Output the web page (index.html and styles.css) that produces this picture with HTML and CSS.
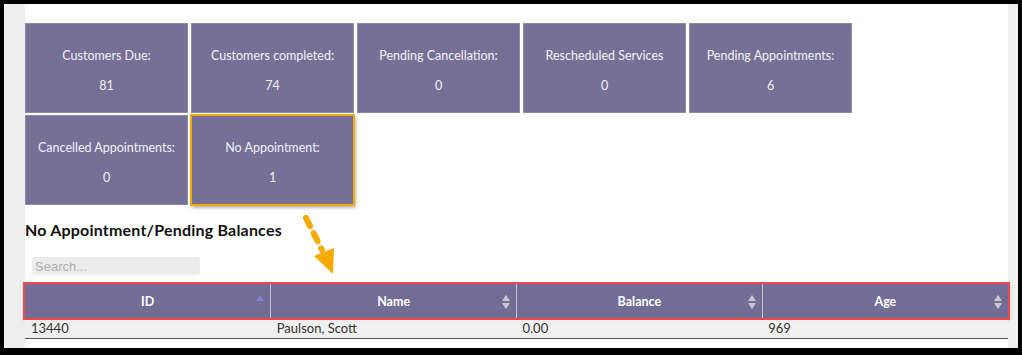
FILE: index.html
```html
<!DOCTYPE html>
<html>
<head>
    <title>Dashboard</title>
    <link rel="stylesheet" href="styles.css">
</head>
<body>
    <div class="screen">
        <div class="gutter"></div>
        <div class="main">
            <div class="tiles">
                <div class="tile"><span class="label">Customers Due:</span><span class="value">81</span></div>
                <div class="tile"><span class="label">Customers completed:</span><span class="value">74</span></div>
                <div class="tile"><span class="label">Pending Cancellation:</span><span class="value">0</span></div>
                <div class="tile"><span class="label">Rescheduled Services</span><span class="value">0</span></div>
                <div class="tile"><span class="label">Pending Appointments:</span><span class="value">6</span></div>
                <div class="tile"><span class="label">Cancelled Appointments:</span><span class="value">0</span></div>
                <div class="tile selected"><span class="label">No Appointment:</span><span class="value">1</span></div>
            </div>

            <h2>No Appointment/Pending Balances</h2>
            <input class="search" type="text" placeholder="Search...">

            <table class="grid">
                <thead>
                    <tr>
                        <th>ID<span class="sort asc"></span></th>
                        <th>Name<span class="sort"></span></th>
                        <th>Balance<span class="sort"></span></th>
                        <th>Age<span class="sort"></span></th>
                    </tr>
                </thead>
                <tbody>
                    <tr>
                        <td>13440</td>
                        <td>Paulson, Scott</td>
                        <td>0.00</td>
                        <td>969</td>
                    </tr>
                </tbody>
            </table>

            <svg class="arrow" width="50" height="70" viewBox="0 0 50 70">
                <path d="M6 6 L22 38" stroke="#f5ab00" stroke-width="6" stroke-linecap="round" stroke-dasharray="9 8" fill="none"/>
                <polygon points="14,44 34,36 33,62" fill="#f5ab00"/>
            </svg>
        </div>
        <div class="rail"></div>
    </div>
</body>
</html>
```

FILE: styles.css
```css
* {
	box-sizing: border-box;
}

body {
	margin: 0;
	padding: 4px 4px 0 4px;
	background-color: #000;
	font-family: Lato, "Open Sans", sans-serif;
}

.screen {
	display: flex;
	height: 344px;
	background-color: #eeeeee;
}

.gutter {
	width: 21px;
	flex: none;
}

.rail {
	width: 10px;
	flex: none;
	background-color: #f1f1f1;
}

.main {
	position: relative;
	flex: 1;
	background-color: #fff;
	padding-top: 19px;
}

.tiles {
	display: flex;
	flex-wrap: wrap;
	gap: 2px 3px;
	width: 830px;
}

.tile {
	width: 163px;
	height: 90px;
	background-color: #767096;
	border: 1px solid #8f8aa8;
	color: #f2f1f6;
	font-size: 12.5px;
	display: flex;
	flex-direction: column;
	align-items: center;
	padding-top: 23px;
	gap: 13px;
}

.tile .label,
.tile .value {
	line-height: 17px;
}

.tile.selected {
	outline: 2px solid #f5ab00;
	outline-offset: -1px;
	box-shadow: 1px 2px 4px rgba(0, 0, 0, 0.45);
}

h2 {
	margin: 15px 0 0 0;
	font-size: 16px;
	letter-spacing: 0.2px;
	line-height: 20px;
	font-weight: bold;
	color: #111;
}

.search {
	display: block;
	margin: 17px 0 0 7px;
	width: 168px;
	height: 18px;
	border: none;
	border-radius: 3px;
	background-color: #ececec;
	font-family: "Liberation Sans", Arial, sans-serif;
	font-size: 13px;
	padding: 0 3px;
}

.search::placeholder {
	color: #b0b0b0;
}

.grid {
	margin-top: 9px;
	width: 100%;
	border-collapse: collapse;
	table-layout: fixed;
	font-size: 13px;
}

.grid thead tr {
	outline: 2px solid #f04848;
	box-shadow: 0 2px 4px rgba(0, 0, 0, 0.35);
}

.grid th {
	position: relative;
	height: 34px;
	background-color: #736d95;
	color: #fff;
	font-size: 12.5px;
	font-weight: bold;
	text-align: center;
	border-left: 1px solid #c9c6d6;
}

.grid th:first-child {
	border-left: none;
}

.sort {
	position: absolute;
	right: 6px;
	top: 11px;
	width: 8px;
	height: 14px;
}

.sort::before,
.sort::after {
	content: "";
	position: absolute;
	left: 0;
	border-left: 4px solid transparent;
	border-right: 4px solid transparent;
}

.sort::before {
	top: 0;
	border-bottom: 6px solid #c9c7d4;
}

.sort::after {
	bottom: 0;
	border-top: 6px solid #c9c7d4;
}

.sort.asc::before {
	border-bottom-color: #8383d6;
}

.sort.asc::after {
	display: none;
}

.grid td {
	height: 20px;
	padding: 0 6px;
	background-color: #f0f0f0;
	color: #333;
	border-bottom: 1px solid #555;
	line-height: 18px;
}

.arrow {
	position: absolute;
	left: 275px;
	top: 208px;
}
```
